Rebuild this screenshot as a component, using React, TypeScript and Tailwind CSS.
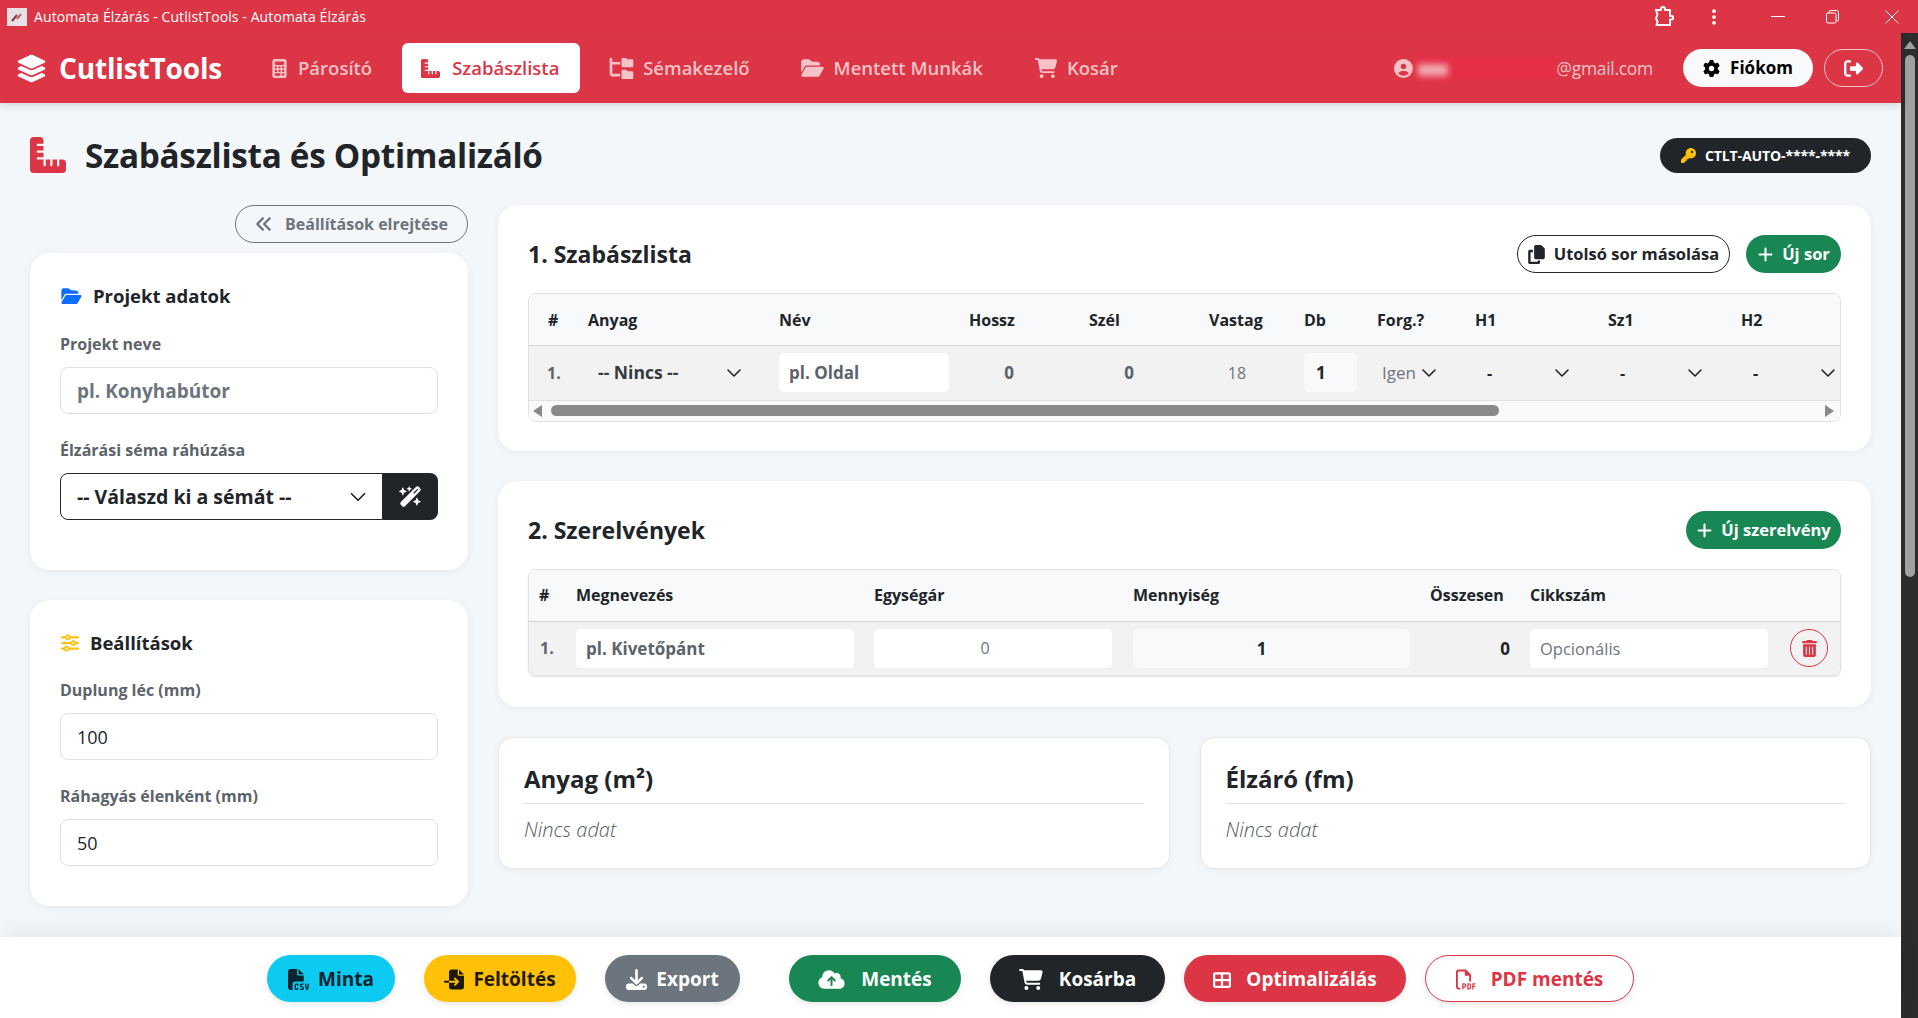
import {
  FaAnglesLeft,
  FaCalculator,
  FaCartShopping,
  FaCircleUser,
  FaCloudArrowUp,
  FaCopy,
  FaDownload,
  FaFileCsv,
  FaFileImport,
  FaFolderOpen,
  FaFolderTree,
  FaGear,
  FaKey,
  FaLayerGroup,
  FaPlus,
  FaRegFilePdf,
  FaRightFromBracket,
  FaRulerCombined,
  FaSliders,
  FaTableCellsLarge,
  FaTrashCan,
  FaWandMagicSparkles,
} from 'react-icons/fa6'
import { ChevronDown, EllipsisVertical } from 'lucide-react'
import type { ReactNode } from 'react'

const font = { fontFamily: '"Open Sans", "Noto Sans", sans-serif' }

function TitleBar() {
  return (
    <div className="h-[33px] flex items-center justify-between bg-[#dc3545] text-white shrink-0">
      <div className="flex items-center pl-[7px]">
        <svg className="w-[20px] h-[18px]" viewBox="0 0 20 18">
          <rect width="20" height="18" fill="#e6e1e4" />
          <path d="M5 13l5-6" stroke="#8a3b47" strokeWidth="2" />
          <path d="M10 11l4-5" stroke="#c9505e" strokeWidth="2" />
        </svg>
        <span className="ml-[7px] text-[14px] tracking-[0.1px]">
          Automata Élzárás - CutlistTools - Automata Élzárás
        </span>
      </div>
      <div className="flex items-center">
        {/* extension button */}
        <svg className="w-[20px] h-[22px] mr-[30px]" viewBox="0 0 20 22" fill="none" stroke="currentColor" strokeWidth="2" strokeLinejoin="round">
          <path d="M2 4h5V3a2 2 0 0 1 4 0v1h5v6h1.500a1.800 1.800 0 0 1 0 3.600H16V19H2.500l1-3.500-1.500-3 1.500-4z" />
        </svg>
        <EllipsisVertical className="w-[20px] h-[20px] mr-[47px]" strokeWidth={2.5} />
        <svg className="w-[14px] h-[14px] mr-[41px]" viewBox="0 0 14 14" stroke="currentColor" fill="none">
          <path d="M0 6.500h14" />
        </svg>
        <svg className="w-[14px] h-[14px] mr-[45px]" viewBox="0 0 14 14" stroke="currentColor" fill="none">
          <rect x="0.500" y="3" width="9.500" height="10" rx="1.500" />
          <path d="M3 3V2a1.500 1.500 0 0 1 1.500-1.500h6a2 2 0 0 1 2 2v7a1.500 1.500 0 0 1-1.500 1.500H10" />
        </svg>
        <svg className="w-[14px] h-[14px] mr-[19px]" viewBox="0 0 14 14" stroke="currentColor" fill="none">
          <path d="M0.500 0.500l13 13M13.500 0.500l-13 13" />
        </svg>
      </div>
    </div>
  )
}

function NavItem({ icon, label, gap, ml }: { icon: ReactNode; label: string; gap: string; ml: string }) {
  return (
    <div className={`flex items-center px-[20px] h-[50px] text-[18.5px] font-semibold text-[#f5c2c7] ${gap} ${ml}`}>
      {icon}
      {label}
    </div>
  )
}

function Navbar() {
  return (
    <nav className="h-[70px] bg-[#dc3545] flex items-center pl-[16px] pr-[18px] shadow-[0_3px_8px_rgba(0,0,0,0.12)] relative z-10 shrink-0">
      <div className="flex items-center gap-[12px] text-white font-bold text-[28px] tracking-[-0.15px] w-[236px] shrink-0">
        <FaLayerGroup className="w-[31px] h-[31px]" />
        CutlistTools
      </div>
      <NavItem icon={<FaCalculator className="w-[15px] h-[19px]" />} label="Párosító" gap="gap-[11px]" ml="ml-0" />
      <div className="flex items-center gap-[12px] pl-[19px] w-[178px] h-[50px] ml-[10px] rounded-[6px] bg-white text-[#dc3545] text-[18.5px] font-semibold">
        <FaRulerCombined className="w-[19px] h-[19px]" />
        Szabászlista
      </div>
      <NavItem icon={<FaFolderTree className="w-[25px] h-[21px]" />} label="Sémakezelő" gap="gap-[9px]" ml="ml-[9px]" />
      <NavItem icon={<FaFolderOpen className="w-[25px] h-[20px]" />} label="Mentett Munkák" gap="gap-[9px]" ml="ml-[10px]" />
      <NavItem icon={<FaCartShopping className="w-[24px] h-[20px]" />} label="Kosár" gap="gap-[9px]" ml="ml-[11px]" />
      <div className="ml-auto flex items-center">
        <FaCircleUser className="w-[19px] h-[19px] text-[#f5c2c7]" />
        <div className="relative w-[140px] h-[24px] ml-[3px]">
          <div className="absolute inset-0 bg-[#e62e46] blur-[3px]"></div>
          <div className="absolute left-[2px] top-[8px] w-[30px] h-[12px] bg-[#f0a9b1] blur-[3px]"></div>
        </div>
        <span className="text-[17.5px] text-[#f5c2c7] tracking-[-0.3px]">@gmail.com</span>
        <button className="ml-[30px] w-[130px] h-[38px] rounded-full bg-[#f8f9fa] text-[#000] font-bold text-[17px] flex items-center justify-center gap-[10px]">
          <FaGear className="w-[17px] h-[17px]" />
          Fiókom
        </button>
        <button className="ml-[11px] w-[59px] h-[38px] rounded-full border border-[#f5c2c7] text-white flex items-center justify-center">
          <FaRightFromBracket className="w-[19px] h-[19px]" />
        </button>
      </div>
    </nav>
  )
}

function Label({ children }: { children: ReactNode }) {
  return <div className="text-[16px] font-bold text-[#5c636a] leading-[24px] mb-[11px]">{children}</div>
}

function FieldInput({ placeholder, value }: { placeholder?: string; value?: string }) {
  return (
    <input
      className="w-full h-[47px] px-[16px] rounded-[8px] border border-[#dee2e6] bg-white text-[18px] text-[#212529] placeholder:text-[19px] placeholder:text-[#6c757d] placeholder:font-bold outline-none"
      placeholder={placeholder}
      defaultValue={value}
    />
  )
}

function Sidebar() {
  return (
    <aside className="w-[438px] shrink-0 flex flex-col">
      <div className="flex justify-end">
        <button className="w-[233px] h-[38px] rounded-full border border-[#6c757d] text-[#6c757d] text-[16px] font-bold flex items-center justify-center gap-[12px]">
          <FaAnglesLeft className="w-[18px] h-[18px]" />
          Beállítások elrejtése
        </button>
      </div>
      <section className="mt-[10px] h-[317px] bg-white rounded-[20px] shadow-[0_2px_10px_rgba(0,0,0,0.05)] px-[30px] pt-[30px]">
        <h3 className="flex items-center gap-[10px] text-[18.5px] font-bold text-[#212529] leading-[26px]">
          <FaFolderOpen className="w-[23px] h-[18px] text-[#0d6efd]" />
          Projekt adatok
        </h3>
        <div className="mt-[23px]">
          <Label>Projekt neve</Label>
          <FieldInput placeholder="pl. Konyhabútor" />
        </div>
        <div className="mt-[24px]">
          <Label>Élzárási séma ráhúzása</Label>
          <div className="flex h-[47px]">
            <div className="flex-1 flex items-center justify-between pl-[16px] pr-[11px] bg-white border border-[#212529] rounded-l-[8px] text-[19.5px] font-bold text-[#212529]">
              -- Válaszd ki a sémát --
              <ChevronDown className="w-[26px] h-[26px]" strokeWidth={1.6} />
            </div>
            <button className="w-[55px] bg-[#212529] rounded-r-[8px] text-white flex items-center justify-center">
              <FaWandMagicSparkles className="w-[23px] h-[23px]" />
            </button>
          </div>
        </div>
      </section>
      <section className="mt-[30px] h-[306px] bg-white rounded-[20px] shadow-[0_2px_10px_rgba(0,0,0,0.05)] px-[30px] pt-[30px]">
        <h3 className="flex items-center gap-[10px] text-[18.5px] font-bold text-[#212529] leading-[26px]">
          <FaSliders className="w-[20px] h-[18px] text-[#ffc107]" />
          Beállítások
        </h3>
        <div className="mt-[22px]">
          <Label>Duplung léc (mm)</Label>
          <FieldInput value="100" />
        </div>
        <div className="mt-[24px]">
          <Label>Ráhagyás élenként (mm)</Label>
          <FieldInput value="50" />
        </div>
      </section>
    </aside>
  )
}

function SelectCell({ text, className }: { text: string; className: string }) {
  return (
    <td className="p-0">
      <div className={`flex items-center justify-between ${className}`}>
        <span className="font-bold">{text}</span>
        <ChevronDown className="w-[24px] h-[24px] text-[#212529]" strokeWidth={1.6} />
      </div>
    </td>
  )
}

function CutTable() {
  return (
    <div className="mt-[20px] rounded-[8px] border border-[#dee2e6] overflow-hidden">
      <table className="w-full table-fixed text-[16px] text-[#212529]">
        <colgroup>
          <col className="w-[59px]" />
          <col className="w-[191px]" />
          <col className="w-[190px]" />
          <col className="w-[120px]" />
          <col className="w-[120px]" />
          <col className="w-[95px]" />
          <col className="w-[73px]" />
          <col className="w-[98px]" />
          <col className="w-[133px]" />
          <col className="w-[133px]" />
          <col />
        </colgroup>
        <thead>
          <tr className="h-[51px] bg-[#f8f9fa] border-b border-[#cfd2d4] text-left">
            <th className="pl-[19px] pt-[2px] font-bold">#</th>
            <th className="pt-[2px] font-bold">Anyag</th>
            <th className="pt-[2px] font-bold">Név</th>
            <th className="pt-[2px] font-bold">Hossz</th>
            <th className="pt-[2px] font-bold">Szél</th>
            <th className="pt-[2px] font-bold">Vastag</th>
            <th className="pt-[2px] font-bold">Db</th>
            <th className="pt-[2px] font-bold">Forg.?</th>
            <th className="pt-[2px] font-bold">H1</th>
            <th className="pt-[2px] font-bold">Sz1</th>
            <th className="pt-[2px] font-bold">H2</th>
          </tr>
        </thead>
        <tbody>
          <tr className="h-[55px] bg-[#f2f2f2] border-b border-[#dee2e6]">
            <td className="pl-[18px] font-bold text-[#5c636a]">1.</td>
            <SelectCell text="-- Nincs --" className="pl-[10px] pr-[33px] text-[17.5px] text-[#343a40]" />
            <td>
              <input
                className="w-[170px] h-[39px] px-[10px] rounded-[5px] bg-white text-[17px] placeholder:text-[#5c636a] placeholder:font-bold outline-none"
                placeholder="pl. Oldal"
              />
            </td>
            <td className="text-[17px] font-bold text-[#5c636a]">
              <span className="block w-[80px] text-center">0</span>
            </td>
            <td className="text-[17px] font-bold text-[#5c636a]">
              <span className="block w-[80px] text-center">0</span>
            </td>
            <td className="text-[#6c757d]">
              <span className="block w-[56px] text-center">18</span>
            </td>
            <td>
              <div className="w-[53px] h-[39px] rounded-[5px] bg-[#f8f9fa] flex items-center pl-[12px] text-[17px] font-bold text-[#212529]">
                1
              </div>
            </td>
            <td className="text-[17px] text-[#6c757d]">
              <div className="flex items-center gap-[1px] pl-[5px]">
                Igen
                <ChevronDown className="w-[24px] h-[24px] text-[#212529]" strokeWidth={1.6} />
              </div>
            </td>
            <SelectCell text="-" className="pl-[12px] pr-[34px]" />
            <SelectCell text="-" className="pl-[12px] pr-[34px]" />
            <SelectCell text="-" className="pl-[12px]" />
          </tr>
        </tbody>
      </table>
      {/* horizontal scrollbar */}
      <div className="h-[20px] bg-[#fafafa] flex items-center pl-[4px] pr-[6px]">
        <div className="w-0 h-0 border-y-[6px] border-y-transparent border-r-[9px] border-r-[#8a8a8a]"></div>
        <div className="ml-[9px] w-[948px] h-[11px] rounded-full bg-[#8a8a8a]"></div>
        <div className="ml-auto w-0 h-0 border-y-[6px] border-y-transparent border-l-[9px] border-l-[#8a8a8a]"></div>
      </div>
    </div>
  )
}

function PartsTable() {
  return (
    <div className="mt-[20px] rounded-[8px] border border-[#dee2e6] overflow-hidden shadow-[0_1px_2px_rgba(0,0,0,0.12)]">
      <table className="w-full table-fixed text-[16px] text-[#212529]">
        <colgroup>
          <col className="w-[47px]" />
          <col className="w-[298px]" />
          <col className="w-[259px]" />
          <col className="w-[297px]" />
          <col className="w-[100px]" />
          <col />
        </colgroup>
        <thead>
          <tr className="h-[51px] bg-[#f8f9fa] border-b border-[#cfd2d4] text-left">
            <th className="pl-[10px] font-bold">#</th>
            <th className="font-bold">Megnevezés</th>
            <th className="font-bold">Egységár</th>
            <th className="font-bold">Mennyiség</th>
            <th className="font-bold">Összesen</th>
            <th className="font-bold">Cikkszám</th>
          </tr>
        </thead>
        <tbody>
          <tr className="h-[54px] bg-[#f2f2f2]">
            <td className="pl-[11px] font-bold text-[#5c636a]">1.</td>
            <td>
              <input
                className="w-[278px] h-[39px] px-[10px] rounded-[5px] bg-white text-[17px] placeholder:text-[#5c636a] placeholder:font-bold outline-none"
                placeholder="pl. Kivetőpánt"
              />
            </td>
            <td>
              <input
                className="w-[238px] h-[39px] pr-[16px] rounded-[5px] bg-white text-center placeholder:text-[#6c757d] outline-none"
                placeholder="0"
              />
            </td>
            <td>
              <div className="w-[277px] h-[39px] pr-[20px] rounded-[5px] bg-[#f8f9fa] flex items-center justify-center text-[17px] font-bold">
                1
              </div>
            </td>
            <td className="text-[17px] font-bold text-right pr-[20px]">0</td>
            <td>
              <div className="flex items-center">
                <input
                  className="w-[238px] h-[39px] px-[10px] rounded-[5px] bg-white text-[16.5px] placeholder:text-[#6c757d] outline-none"
                  placeholder="Opcionális"
                />
                <button className="ml-[22px] w-[38px] h-[38px] rounded-full border border-[#dc3545] text-[#dc3545] flex items-center justify-center">
                  <FaTrashCan className="w-[15px] h-[17px]" />
                </button>
              </div>
            </td>
          </tr>
        </tbody>
      </table>
    </div>
  )
}

function SummaryCard({ title }: { title: string }) {
  return (
    <section className="flex-1 h-[132px] bg-white rounded-[14px] border border-[#e3e6e8] shadow-[0_2px_10px_rgba(0,0,0,0.04)] px-[25px] pt-[25px]">
      <h4 className="text-[24px] font-bold text-[#212529] leading-[32px] pb-[8px] border-b border-[#dee2e6]">
        {title}
      </h4>
      <p className="mt-[14px] text-[20px] italic font-light text-[#555b61] leading-[24px]">Nincs adat</p>
    </section>
  )
}

function Pill({ children, className }: { children: ReactNode; className: string }) {
  return (
    <button className={`h-[47px] pt-[2px] rounded-full flex items-center justify-center text-[19px] font-bold shadow-[0_2px_6px_rgba(0,0,0,0.1)] ${className}`}>
      {children}
    </button>
  )
}

function Footer() {
  return (
    <footer className="h-[81px] bg-white shadow-[0_-6px_20px_rgba(0,0,0,0.06)] flex items-center shrink-0 pl-[267px] pt-[2px] relative z-10">
      <Pill className="w-[128px] gap-[9px] bg-[#0dcaf0] text-[#0b2530]">
        <FaFileCsv className="w-[21px] h-[23px]" />
        Minta
      </Pill>
      <Pill className="ml-[29px] w-[152px] gap-[9px] bg-[#ffc107] text-[#1f1a05]">
        <FaFileImport className="w-[20px] h-[23px]" />
        Feltöltés
      </Pill>
      <Pill className="ml-[29px] w-[135px] gap-[9px] bg-[#6c757d] text-white">
        <FaDownload className="w-[21px] h-[21px]" />
        Export
      </Pill>
      <Pill className="ml-[49px] w-[172px] gap-[16px] bg-[#198754] text-white">
        <FaCloudArrowUp className="w-[27px] h-[21px]" />
        Mentés
      </Pill>
      <Pill className="ml-[29px] w-[175px] gap-[16px] bg-[#212529] text-white">
        <FaCartShopping className="w-[24px] h-[21px]" />
        Kosárba
      </Pill>
      <Pill className="ml-[19px] w-[222px] gap-[15px] bg-[#dc3545] text-white">
        <FaTableCellsLarge className="w-[18px] h-[18px]" />
        Optimalizálás
      </Pill>
      <Pill className="ml-[19px] w-[209px] gap-[15px] bg-white border border-[#dc3545] text-[#dc3545]">
        <FaRegFilePdf className="w-[20px] h-[23px]" />
        PDF mentés
      </Pill>
    </footer>
  )
}

function PageScrollbar() {
  return (
    <div className="w-[17px] bg-[#2c2c2c] shrink-0 flex flex-col items-center pt-[8px]">
      <div className="w-0 h-0 border-x-[6px] border-x-transparent border-b-[8px] border-b-[#a0a0a0]"></div>
      <div className="mt-[6px] w-[10px] h-[522px] rounded-full bg-[#a0a0a0]"></div>
    </div>
  )
}

export default function App() {
  return (
    <div className="w-[1918px] h-[1018px] overflow-hidden flex flex-col bg-[#f4f7f9]" style={font}>
      <TitleBar />
      <div className="flex-1 flex min-h-0">
        <div className="flex-1 flex flex-col min-w-0">
          <Navbar />
          <main className="flex-1 min-h-0 overflow-hidden px-[30px] pt-[34px]">
            <div className="flex items-center justify-between h-[36px]">
              <h1 className="flex items-center gap-[19px] text-[33.3px] font-bold text-[#212529] tracking-[-0.3px]">
                <FaRulerCombined className="w-[36px] h-[36px] text-[#dc3545]" />
                <span className="pt-[2px]">Szabászlista és Optimalizáló</span>
              </h1>
              <div className="w-[211px] h-[35px] rounded-full bg-[#212529] text-white text-[14px] font-bold tracking-[-0.1px] flex items-center justify-center gap-[9px]">
                <FaKey className="w-[15px] h-[15px] text-[#ffc107]" />
                CTLT-AUTO-****-****
              </div>
            </div>
            <div className="flex mt-[32px]">
              <Sidebar />
              <div className="ml-[30px] flex-1 min-w-0 flex flex-col">
                <section className="h-[246px] bg-white rounded-[20px] shadow-[0_2px_10px_rgba(0,0,0,0.05)] px-[30px] pt-[30px]">
                  <div className="flex items-center justify-between h-[38px]">
                    <h2 className="text-[23px] font-bold text-[#212529]">1. Szabászlista</h2>
                    <div className="flex gap-[16px]">
                      <button className="w-[213px] h-[38px] rounded-full border border-[#212529] text-[#212529] text-[16.5px] font-bold flex items-center justify-center gap-[9px]">
                        <FaCopy className="w-[17px] h-[19px]" />
                        Utolsó sor másolása
                      </button>
                      <button className="w-[95px] h-[38px] rounded-full bg-[#198754] text-white text-[16.5px] font-bold flex items-center justify-center gap-[8px]">
                        <FaPlus className="w-[17px] h-[17px]" />
                        Új sor
                      </button>
                    </div>
                  </div>
                  <CutTable />
                </section>
                <section className="mt-[30px] h-[226px] bg-white rounded-[20px] shadow-[0_2px_10px_rgba(0,0,0,0.05)] px-[30px] pt-[30px]">
                  <div className="flex items-center justify-between h-[38px]">
                    <h2 className="text-[23px] font-bold text-[#212529]">2. Szerelvények</h2>
                    <button className="w-[155px] h-[38px] rounded-full bg-[#198754] text-white text-[16.5px] font-bold flex items-center justify-center gap-[8px]">
                      <FaPlus className="w-[17px] h-[17px]" />
                      Új szerelvény
                    </button>
                  </div>
                  <PartsTable />
                </section>
                <div className="mt-[30px] flex gap-[30px]">
                  <SummaryCard title="Anyag (m²)" />
                  <SummaryCard title="Élzáró (fm)" />
                </div>
              </div>
            </div>
          </main>
          <Footer />
        </div>
        <PageScrollbar />
      </div>
    </div>
  )
}
